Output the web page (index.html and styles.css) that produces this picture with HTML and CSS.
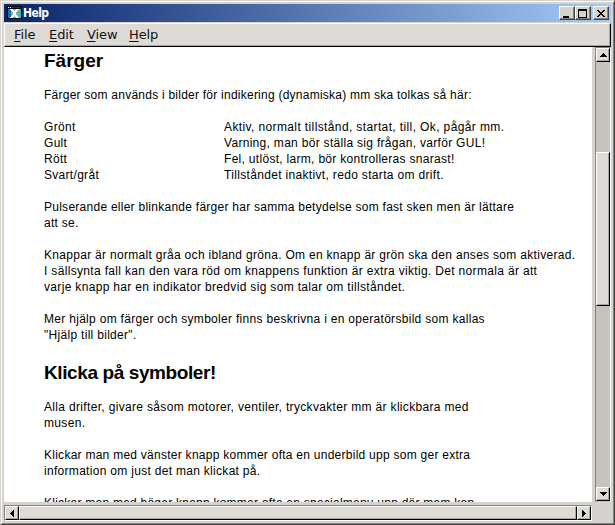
FILE: index.html
```
<!DOCTYPE html>
<html lang="sv">
<head>
<meta charset="utf-8">
<title>Help</title>
<link rel="stylesheet" href="styles.css">
</head>
<body>
<div class="window">
  <header class="titlebar">
    <svg class="app-icon" width="15" height="13" viewBox="0 0 15 13" shape-rendering="crispEdges">
      <path fill="#000" d="M0 0h15v13H0z"/>
      <path fill="#1674a8" d="M1 3h3v9H1z"/>
      <path fill="#43b9b4" d="M11 3h3v9h-3z"/>
      <path fill="#8eabc5" d="M4 3h7v9H4z"/>
      <path fill="#1029d5" d="M1 1h13v1H1z"/>
      <path fill="#fff" d="M1 1h1v1H1zM3 1h1v1H3zM3 3h3v1h1v1h1V4h1V3h3v1h-1v1h-1v1H9v3h1v1h1v1h1v1H9v-1H8v-1H7v1H6v1H3v-1h1v-1h1V9h1V6H5V5H4V4H3z"/>
    </svg>
    <span class="title">Help</span>
    <div class="controls">
      <button class="control" aria-label="Minimize"><svg width="12" height="11" viewBox="0 0 12 11" shape-rendering="crispEdges"><path d="M2 8h6v2H2z"/></svg></button>
      <button class="control" aria-label="Maximize"><svg width="12" height="11" viewBox="0 0 12 11" shape-rendering="crispEdges"><path fill-rule="evenodd" d="M1 1h9v9H1zM2 3v6h7V3z"/></svg></button>
      <button class="control close" aria-label="Close"><svg width="12" height="11" viewBox="0 0 12 11" shape-rendering="crispEdges"><path d="M2 2h2v1h1v1h2V3h1V2h2v1H9v1H8v1H7v1h1v1h1v1h1v1H8V8H7V7H5v1H4v1H2V8h1V7h1V6h1V5H4V4H3V3H2z"/></svg></button>
    </div>
  </header>
  <nav class="menubar">
    <a class="m-file"><u>F</u>ile</a><a class="m-edit"><u>E</u>dit</a><a class="m-view"><u>V</u>iew</a><a><u>H</u>elp</a>
  </nav>
  <div class="middle">
    <main class="page">
      <h1>Färger</h1>
      <p class="tighter">Färger som används i bilder för indikering (dynamiska) mm ska tolkas så här:</p>
      <dl>
        <dt>Grönt</dt><dd class="looser">Aktiv, normalt tillstånd, startat, till, Ok, pågår mm.</dd>
        <dt>Gult</dt><dd>Varning, man bör ställa sig frågan, varför GUL!</dd>
        <dt>Rött</dt><dd>Fel, utlöst, larm, bör kontrolleras snarast!</dd>
        <dt>Svart/gråt</dt><dd class="loose">Tillståndet inaktivt, redo starta om drift.</dd>
      </dl>
      <p class="tight">Pulserande eller blinkande färger har samma betydelse som fast sken men är lättare<br>att se.</p>
      <p>Knappar är normalt gråa och ibland gröna. Om en knapp är grön ska den anses som aktiverad.<br><span class="loose">I sällsynta fall kan den vara röd om knappens funktion är extra viktig. Det normala är att<br>varje knapp har en indikator bredvid sig som talar om tillståndet.</span></p>
      <p>Mer hjälp om färger och symboler finns beskrivna i en operatörsbild som kallas<br>"Hjälp till bilder".</p>
      <h1 class="second">Klicka på symboler!</h1>
      <p class="loose">Alla drifter, givare såsom motorer, ventiler, tryckvakter mm är klickbara med<br>musen.</p>
      <p><span class="tight">Klickar man med vänster knapp kommer ofta en underbild upp som ger extra</span><br>information om just det man klickat på.</p>
      <p class="tighter">Klickar man med höger knapp kommer ofta en specialmenu upp där mam kan</p>
    </main>
    <div class="vscroll">
      <div class="arrow"><svg width="7" height="4" viewBox="0 0 7 4" shape-rendering="crispEdges"><path d="M3 0h1v1h1v1h1v1h1v1H0V3h1V2h1V1h1z"/></svg></div>
      <div class="vtrack"><div class="vthumb"></div></div>
      <div class="arrow"><svg width="7" height="4" viewBox="0 0 7 4" shape-rendering="crispEdges"><path d="M0 0h7v1H6v1H5v1H4v1H3V3H2V2H1V1H0z"/></svg></div>
    </div>
  </div>
  <div class="hscroll">
    <div class="arrow"><svg width="4" height="7" viewBox="0 0 4 7" shape-rendering="crispEdges"><path d="M4 0v7H3V6H2V5H1V4H0V3h1V2h1V1h1V0z"/></svg></div>
    <div class="hthumb"></div>
    <div class="arrow"><svg width="4" height="7" viewBox="0 0 4 7" shape-rendering="crispEdges"><path d="M0 0h1v1h1v1h1v1h1v1H3v1H2v1H1v1H0z"/></svg></div>
  </div>
</div>
</body>
</html>
```
FILE: styles.css
```
* { box-sizing: border-box; }
body { margin: 0; }

.window {
  width: 615px;
  height: 525px;
  padding: 3px 2px 1px 3px;
  display: flex;
  flex-direction: column;
  overflow: hidden;
  background: #d6d3ce;
  border: 1px solid #d6d3ce;
  border-right-color: #424142;
  border-bottom-color: #424142;
  box-shadow: inset 1px 1px #fff, inset -1px -1px #848284;
}

.titlebar {
  width: 607px;
  height: 18px;
  flex: none;
  display: flex;
  align-items: flex-start;
  padding: 2px 2px 0 3px;
  background: linear-gradient(90deg, #08246b, #a5cbf7);
}
.app-icon { flex: none; }
.title {
  margin-left: 1px;
  flex: 1;
  color: #fff;
  font: bold 12px/14px "DejaVu Sans Condensed", "DejaVu Sans", sans-serif;
  letter-spacing: -0.6px;
}
.controls { display: flex; }
.control {
  width: 16px;
  height: 14px;
  padding: 0;
  border: 1px solid;
  border-color: #fff #424142 #424142 #fff;
  background: #d6d3ce;
  box-shadow: inset -1px -1px #848284;
  display: block;
}
.control svg { display: block; margin-left: 1px; }
.close { margin-left: 2px; }

.menubar {
  width: 607px;
  height: 24px;
  margin-top: 1px;
  flex: none;
  display: flex;
  padding-left: 9px;
  background: #dedbd6;
  border: 1px solid;
  border-color: #fff #000 #000 #fff;
  box-shadow: inset 0 -1px #aaa6a0, inset -1px 0 #aaa6a0;
  color: #111;
  font: 13px/22px "DejaVu Sans", sans-serif;
  letter-spacing: -0.1px;
}
.menubar u { text-underline-offset: 2px; }
.m-file { width: 35px; }
.m-edit { width: 38px; }
.m-view { width: 42px; }

.middle {
  height: 455px;
  flex: none;
  display: flex;
}
.page {
  width: 588px;
  height: 455px;
  padding: 1px 0 0 40px;
  overflow: hidden;
  background: #fff;
  color: #000;
  font: 12px/16px "Liberation Sans", sans-serif;
  letter-spacing: 0.3px;
  white-space: nowrap;
}
.tighter { letter-spacing: 0.24px; }
.tight { letter-spacing: 0.26px; }
.loose { letter-spacing: 0.33px; }
.looser { letter-spacing: 0.38px; }
h1 {
  height: 39px;
  margin: 0;
  font-size: 19px;
  line-height: 25px;
  letter-spacing: 0;
}
.second {
  margin-top: 17px;
  letter-spacing: -0.4px;
}
p, dl { margin: 0 0 16px; }
dl {
  display: grid;
  grid-template-columns: 180px auto;
}
dt, dd { margin: 0; }

.vscroll {
  width: 16px;
  height: 455px;
  margin-left: 3px;
  display: flex;
  flex-direction: column;
  border: 1px solid;
  border-color: #848284 #fff transparent #848284;
  border-bottom: 0;
  background: #c6c3bd;
}
.arrow {
  width: 14px;
  height: 14px;
  flex: none;
  display: flex;
  align-items: center;
  justify-content: center;
  background: #dedbd6;
  border: 1px solid;
  border-color: #fff #000 #000 #fff;
  box-shadow: inset -1px -1px #aaa6a0;
}
.vtrack { height: 425px; padding-top: 90px; }
.vthumb {
  height: 154px;
  background: #dedbd6;
  border: 1px solid;
  border-color: #fff #000 #000 #fff;
  box-shadow: inset -1px -1px #aaa6a0;
}

.hscroll {
  width: 588px;
  height: 16px;
  margin-top: 3px;
  flex: none;
  display: flex;
  border: 1px solid;
  border-color: #848284 #fff #fff #848284;
}
.hthumb {
  width: 558px;
  height: 14px;
  background: #dedbd6;
  border: 1px solid;
  border-color: #fff #000 #000 #fff;
  box-shadow: inset -1px -1px #aaa6a0;
}
```
